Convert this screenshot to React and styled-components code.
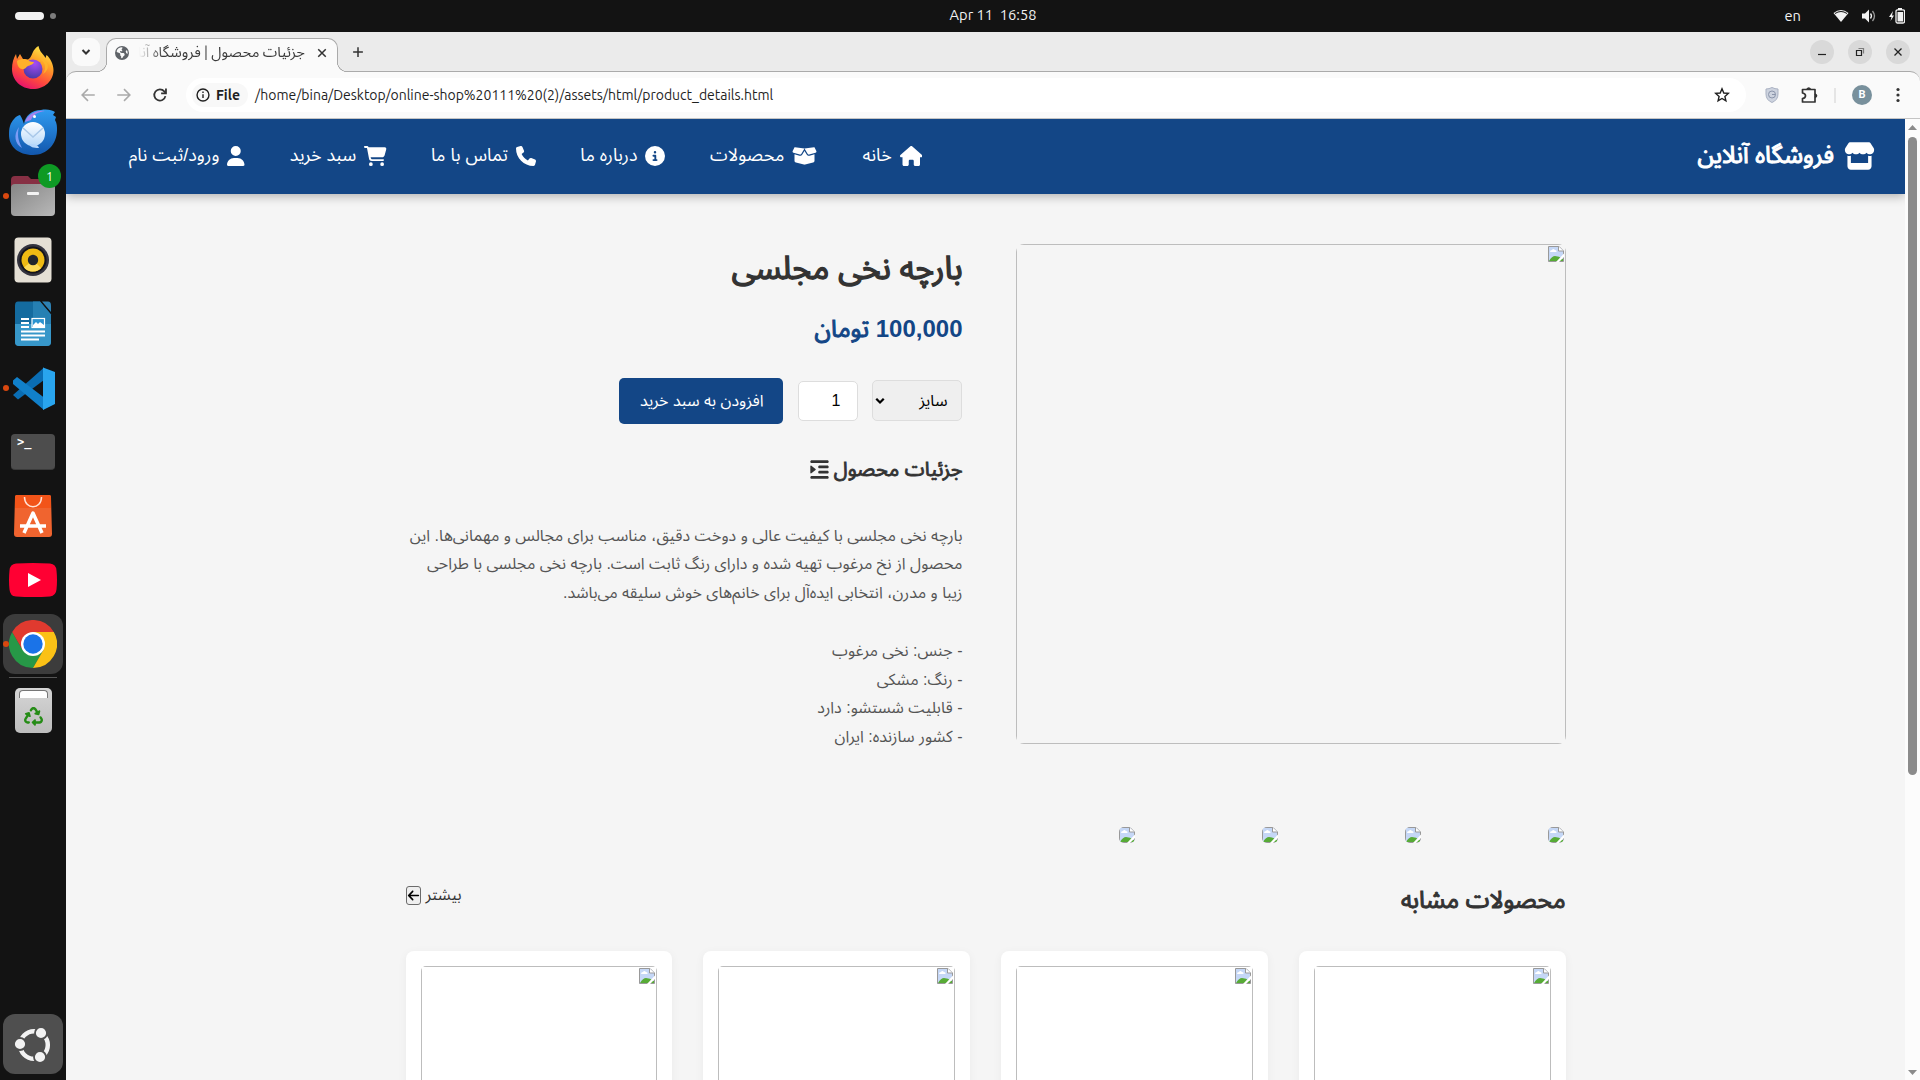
import React from 'react';
import styled, { createGlobalStyle, css } from 'styled-components';
import {
  FaStore, FaHouse, FaBoxOpen, FaCircleInfo, FaPhone, FaCartShopping, FaUser, FaIndent, FaArrowLeft,
  FaEarthAmericas, FaRecycle,
} from 'react-icons/fa6';

const PERSIAN = "'Liberation Sans', 'Noto Sans Arabic', 'Noto Sans', 'DejaVu Sans', sans-serif";
const SYSTEM = "'Ubuntu', 'Noto Sans', 'Noto Sans Arabic', 'DejaVu Sans', sans-serif";
const BLUE = '#134686';

const Global = createGlobalStyle`
  * { box-sizing: border-box; }
  body { margin: 0; overflow: hidden; background: #131313; }
  svg { display: block; flex: none; }
`;

/* Heavier strokes that keep the advance widths of the regular face. */
const heavy = css`font-weight: 400; -webkit-text-stroke: 0.043em currentColor;`;

/* ---------- desktop ---------- */
const Desktop = styled.div`
  width: 1920px; height: 1080px; display: flex; flex-direction: column;
  background: #131313; font-family: ${SYSTEM}; overflow: hidden;
`;
const TopBar = styled.header`
  height: 32px; flex: none; display: grid; grid-template-columns: 1fr auto 1fr; align-items: center;
  color: #f2f2f2; font-size: 14.667px;
`;
const Workspaces = styled.div`display: flex; align-items: center; gap: 6px; padding-left: 15px;`;
const Pill = styled.i`width: 29px; height: 8px; border-radius: 4px; background: #f2f2f2;`;
const Dot = styled.i`width: 6px; height: 6px; border-radius: 50%; background: #7d7d7d;`;
const Clock = styled.div`white-space: pre; padding-left: 66px; line-height: 30px; height: 32px;`;
const Tray = styled.div`display: flex; align-items: center; justify-content: flex-end; padding-right: 15px;`;
const Lang = styled.span`margin-right: 32px; line-height: 30px;`;
const TrayIcons = styled.div`display: flex; align-items: center; gap: 12px;`;
const Workarea = styled.div`flex: 1; min-height: 0; display: flex;`;

/* ---------- dock ---------- */
const Dock = styled.nav`width: 66px; flex: none; display: flex; flex-direction: column; padding: 4px 0 4px;`;
const DockItem = styled.div`
  height: 64px; width: 66px; position: relative; display: flex; align-items: center; justify-content: center; flex: none;
  ${p => p.$running && css`&::after { content: ''; position: absolute; left: 3px; top: 29px; width: 6px; height: 6px; border-radius: 50%; background: #d9480f; }`}
`;
const Plate = styled.div`
  width: 60px; height: 60px; border-radius: 12px; display: flex; align-items: center; justify-content: center;
  background: ${p => p.$bg};
`;
const Badge = styled.span`
  position: absolute; left: 38px; top: 0; width: 23px; height: 24px; border-radius: 50%; background: #0e9a24;
  color: #fff; font-size: 12.5px; line-height: 24px; text-align: center;
`;
const Divider = styled.div`width: 48px; height: 1px; margin: 1px 9px 0; background: #555; flex: none;`;
const Spacer = styled.div`flex: 1;`;
const TermBox = styled.div`
  width: 44px; height: 36px; border-radius: 4px; background: #4d4d4d; border-bottom: 1px solid #3b3b3b;
  color: #fff; font: bold 12px/14px 'DejaVu Sans Mono', 'Liberation Mono', monospace; padding: 1px 0 0 6px;
`;
const TrashBox = styled.div`
  width: 37px; height: 45px; border-radius: 5px; background: linear-gradient(#d5d5d5, #bdbdbd); color: #258c16;
  display: flex; flex-direction: column; align-items: center; gap: 9px; padding-top: 2px;
`;
const TrashSlot = styled.i`width: 29px; height: 8px; border-radius: 4px 4px 0 0; background: #fff; border: 1px solid #777; border-bottom: 0;`;

const Firefox = () => (
  <svg width="44" height="44" viewBox="0 0 44 44">
    <defs>
      <linearGradient id="ff" x1=".8" y1="0" x2=".3" y2="1"><stop offset="0" stopColor="#fff14f" /><stop offset=".35" stopColor="#ffa326" /><stop offset=".7" stopColor="#ff4a3d" /><stop offset="1" stopColor="#e5106f" /></linearGradient>
      <radialGradient id="fp" cx=".6" cy=".2" r=".8"><stop offset="0" stopColor="#a74cf5" /><stop offset="1" stopColor="#4b3aa8" /></radialGradient>
    </defs>
    <path fill="url(#ff)" d="M22 43C10 43 1 34 1 23c0-6 1.500-11 4-15l1 5 3-5 3 5 5 .5C20 12 21 8 21.500 7c1-3 4-6 6-7 1 6 5 8 7 12l1-3c4 3 7 10 7 15 0 11-9 19-20.500 19z" />
    <circle cx="22" cy="23" r="9.500" fill="url(#fp)" />
    <path fill="#ffb02b" d="M6 15c4-3 8-2 11-1 2 2 5 2 6 2-1 3-4 3-6 4-2 1-3 4-6 3-3 0-5-4-5-8z" />
    <path fill="#ffb62c" opacity=".8" d="M28 13c6 2 8 8 4 15 8-5 6-14-4-15z" />
  </svg>
);
const Thunderbird = () => (
  <svg width="48" height="48" viewBox="0 0 48 48">
    <defs>
      <linearGradient id="tb" x1="0" y1="0" x2="0" y2="1"><stop offset="0" stopColor="#2f9bf0" /><stop offset="1" stopColor="#1257ad" /></linearGradient>
      <linearGradient id="te" x1="0" y1="0" x2="0" y2="1"><stop offset="0" stopColor="#fff" /><stop offset="1" stopColor="#b7d9fa" /></linearGradient>
    </defs>
    <path fill="url(#tb)" d="M1 18C3 12 7 8 11 7c2 3 3 6 4 9 1-8 8-14 17-14 6-1 11 0 14 2l-2 3 3 2-1 3c2 3 2 7 2 10 0 14-10 25-24 25C9 47 0 38 0 27c0-3 0-6 1-9z" />
    <path d="M16 14c3-8 11-12 20-11-8 1-12 4-14 9z" fill="#a583ef" />
    <path d="M10 19c-6 8-4 17 3 21-4-8-5-13-3-21z" fill="#7c9cf5" />
    <circle cx="24" cy="26" r="12" fill="url(#te)" />
    <path d="m14 20 10 9 10-9" fill="none" stroke="#a9c8e9" strokeWidth="1.500" />
    <circle cx="25.500" cy="8.500" r="1.500" fill="#fff" />
    <path d="M20 36c4 0 9 0 10 4-6 0-9-1-10-4z" fill="#b5d6fb" />
  </svg>
);
const Files = () => (
  <svg width="44" height="40" viewBox="0 0 44 40">
    <defs><linearGradient id="fi" x1="0" y1="0" x2="1" y2="1"><stop offset="0" stopColor="#868686" /><stop offset="1" stopColor="#b8b8b8" /></linearGradient></defs>
    <path d="M0 14V4q0-4 4-4h13l3 3h20q4 0 4 4v9H0z" fill="#873044" />
    <path d="M0 12q0-4 4-4h36q4 0 4 4v24q0 4-4 4H4q-4 0-4-4z" fill="url(#fi)" />
    <rect x="16" y="16" width="12" height="3" rx="1" fill="#f3f3f3" />
  </svg>
);
const Rhythmbox = () => (
  <svg width="38" height="46" viewBox="0 0 38 46">
    <rect x=".5" y=".5" width="37" height="45" rx="4" fill="#e5e0d5" />
    <circle cx="19" cy="23" r="16" fill="#34343f" />
    <circle cx="19" cy="23" r="13.500" fill="#15151b" />
    <circle cx="19" cy="23" r="11.500" fill="#efbb13" />
    <path d="M19 23 10 30.500A11.500 11.500 0 0 0 27 31z" fill="#ffdc57" />
    <circle cx="19" cy="23" r="5.200" fill="#23272c" />
  </svg>
);
const Writer = () => (
  <svg width="38" height="46" viewBox="0 0 38 46">
    <path d="M4 .500h22l11 13V41q0 4-4 4H5q-4 0-4-4V4.500q0-4 3-4z" fill="#146b9f" />
    <path d="M19 .500h7l11 13v9.500H19z" fill="#2680b3" />
    <path d="M1 23h36v18q0 4-4 4H5q-4 0-4-4z" fill="#3797c9" />
    <path d="M28 .500h6q3 0 3 4V11z" fill="#2e82b4" />
    <path stroke="#fff" strokeWidth="2" d="M7 18h8M7 22h8M7 26h8M7 30.500h24M7 34.500h24M7 38.500h18" />
    <rect x="18" y="17.500" width="12.500" height="9" fill="#2c93cf" stroke="#fff" strokeWidth="1.200" />
    <path d="M19 26v-2l3-3 2 2 2-2 4 3v2z" fill="#fff" />
  </svg>
);
const VsCode = () => (
  <svg width="43" height="43" viewBox="0 0 43 43">
    <path d="M1 28 32 .500v12.500L6 32.500z" fill="#0a6db3" />
    <path d="M1 13.500 5 10l27 20.500V43L1 17z" fill="#1180ca" />
    <path d="M31 .500 43 5v32L31 43z" fill="#29a5ee" />
  </svg>
);
const AppCenter = () => (
  <svg width="38" height="44" viewBox="0 0 38 44">
    <path d="M3 1h32q2 0 2 2l1 37q0 3-3 3H3q-3 0-3-3L1 3q0-2 2-2z" fill="#f0642f" />
    <path d="M3 1h32q2 0 2 2v11H1V3q0-2 2-2z" fill="#f25419" />
    <path d="M10.500 3c0 13 17 13 17 0" fill="none" stroke="#ffe3d6" strokeWidth="1.500" />
    <path d="M10 39 19 19l9 20M6 32h26" fill="none" stroke="#fff" strokeWidth="3.500" strokeLinejoin="round" />
  </svg>
);
const YouTube = () => (
  <svg width="48" height="34" viewBox="0 0 48 34"><path d="M7 .500q17-1 34 0 6 .500 6.500 7 1 9.500 0 19-.500 6-6.500 7-17 1-34 0-6-.500-6.500-7-1-9.500 0-19Q1 1 7 .500z" fill="#ff0033" /><path d="m19 10 13 7-13 7z" fill="#fff" /></svg>
);
const ChromeLogo = () => (
  <svg width="48" height="48" viewBox="0 0 48 48">
    <path d="M3.200 12 13.600 30 24 24l10.400 6L24 48A24 24 0 0 1 3.200 12z" fill="#279847" />
    <path d="M24 12h20.800A24 24 0 0 1 24 48l10.400-18z" fill="#fbc116" />
    <path d="M24 12h20.800A24 24 0 0 0 3.200 12l10.400 18z" fill="#e03a2f" />
    <circle cx="24" cy="24" r="12" fill="#fff" /><circle cx="24" cy="24" r="9.700" fill="#1a73e8" />
  </svg>
);
const UbuntuLogo = () => (
  <svg width="38" height="38" viewBox="0 0 38 38">
    <circle cx="20" cy="20" r="13.800" fill="none" stroke="#f2f2f2" strokeWidth="4.500" />
    <g fill="#f2f2f2" stroke="#4f4f4f" strokeWidth="1.800"><circle cx="6" cy="19" r="6" /><circle cx="27" cy="8" r="6" /><circle cx="26" cy="32" r="6" /></g>
  </svg>
);

/* ---------- browser chrome ---------- */
const Browser = styled.section`flex: 1; min-width: 0; display: flex; flex-direction: column; background: #ebebeb;`;
const TabStrip = styled.div`height: 39px; flex: none; display: flex; padding: 6px 10px 0 6px;`;
const TabSearch = styled.div`
  width: 28px; height: 28px; border-radius: 9px; background: #fafafa; display: flex; align-items: center; justify-content: center;
`;
const Tab = styled.div`
  width: 232px; height: 34px; margin: 0 0 0 6px; position: relative; z-index: 1; background: #fafafa;
  border: 1px solid #aaa; border-bottom: 0; border-radius: 10px 10px 0 0; display: flex; align-items: center;
  padding: 0 9px 6px 8px; color: #3c3c3c;
  &::before, &::after { content: ''; position: absolute; bottom: 0; width: 10px; height: 10px; }
  &::before { left: -10px; background: radial-gradient(circle at 0 0, transparent 9px, #aaa 9.300px 9.800px, #fafafa 10.200px); }
  &::after { right: -10px; background: radial-gradient(circle at 100% 0, transparent 9px, #aaa 9.300px 9.800px, #fafafa 10.200px); }
`;
const TabTitle = styled.div`
  direction: rtl; width: 167px; margin: 0 11px 2px 10px; overflow: hidden; white-space: nowrap; font-size: 14.667px; line-height: 26px;
  mask-image: linear-gradient(to right, transparent, #000 24px);
`;
const NewTab = styled.div`padding: 8px 0 0 14px;`;
const WindowButtons = styled.div`margin-left: auto; display: flex; gap: 14px; padding-top: 2px;`;
const WinButton = styled.div`width: 24px; height: 24px; border-radius: 50%; background: #d9d9d9; display: flex; align-items: center; justify-content: center;`;
const Toolbar = styled.div`
  height: 48px; flex: none; background: #fafafa; border: 1px solid #aaa; border-bottom-color: #c4c4c4; border-width: 1px 0;
  border-radius: 10px 10px 0 0; display: flex; align-items: center; padding: 0 20px 0 13px; color: #3a3a3a;
`;
const NavButtons = styled.div`display: flex; gap: 18px; width: 107px;`;
const AddressBar = styled.div`
  flex: 1; height: 34px; border-radius: 17px; background: #fff; display: flex; align-items: center; padding: 0 16px 0 6px;
  color: #1f1f1f; font-size: 14px;
`;
const FileChip = styled.div`
  height: 24px; border-radius: 12px; background: #f8f8f8; display: flex; align-items: center; gap: 6px; padding: 0 8px 0 4px;
  font-weight: 600;
`;
const Url = styled.div`flex: 1; padding-left: 7px; white-space: nowrap; letter-spacing: -0.015px;`;
const Extensions = styled.div`display: flex; align-items: center; padding-left: 19px;`;
const ShieldSlot = styled.div`margin-right: 22px;`;
const Avatar = styled.div`
  width: 20px; height: 20px; border-radius: 50%; background: #78909c; color: #fff; font: bold 11px/20px Roboto, sans-serif;
  text-align: center; margin: 0 24px 0 16px;
`;
const Separator = styled.i`width: 2px; height: 15px; background: #e5e5e5; margin-left: 16px;`;

/* ---------- page ---------- */
const Viewport = styled.div`flex: 1; min-height: 0; display: flex;`;
const Page = styled.div`
  flex: 1; min-width: 0; direction: rtl; background: #f5f5f5; font-family: ${PERSIAN}; color: #333; overflow: hidden;
  display: flex; flex-direction: column; align-items: center;
`;
const Scrollbar = styled.div`
  width: 15px; flex: none; background: #fcfcfc; display: flex; flex-direction: column; align-items: center; padding: 6px 0 5px;
`;
const Thumb = styled.i`width: 9px; height: 638px; margin: 7px 0 auto; border-radius: 5px; background: #8b8b8b;`;
const SiteHeader = styled.header`
  align-self: stretch; height: 75px; flex: none; background: ${BLUE}; color: #fff; box-shadow: 0 2px 10px rgba(0, 0, 0, .3);
  display: flex; align-items: center; justify-content: space-between; padding: 0 30px 2px 61px;
`;
const Brand = styled.div`
  display: flex; align-items: center; gap: 10px; font-size: 24px; ${heavy} svg { width: 31px; height: 28px; -webkit-text-stroke: 0; }
`;
const SiteNav = styled.nav`display: flex; gap: 43px;`;
const NavLink = styled.a`
  display: flex; align-items: center; gap: 8px; font-size: 17.900px; line-height: 30px; white-space: nowrap;
  svg { height: 20px; width: ${p => p.$icon}px; }
`;
const NavText = styled.span`width: ${p => p.$w}px; padding-bottom: 1px;`;
const Container = styled.main`width: 1160px; flex: none; padding-top: 50px;`;
const Product = styled.section`display: flex; gap: 53px; height: 500px;`;
const FrameClip = styled.div`width: ${p => p.$w}; height: ${p => p.$h}px; flex: none; border-radius: ${p => p.$r}px; overflow: hidden;`;
const FrameLine = styled.div`height: 100%; border: 1px solid #bdbdbd; padding: 1px;`;
const Info = styled.div`width: 557px;`;
const Title = styled.h1`margin: 0; font-size: 32px; line-height: 48px; height: 65px; white-space: nowrap; ${heavy}`;
const Price = styled.div`font-size: 24px; color: ${BLUE}; line-height: 40px; height: 69px; white-space: nowrap; ${heavy}`;
const Digits = styled.b`-webkit-text-stroke: 0; font-weight: bold;`;
const BuyRow = styled.div`display: flex; align-items: center; gap: 14px; height: 46px; padding-right: 1px;`;
const SizeSelect = styled.div`
  width: 90px; height: 41px; border: 1px solid #ddd; border-radius: 5px; background: #efefef; color: #000; margin-bottom: 1px;
  display: flex; align-items: center; justify-content: space-between; padding: 0 13px 0 1px; font-size: 16px;
`;
const Quantity = styled.div`
  width: 60px; height: 40px; border: 1px solid #ddd; border-radius: 5px; background: #fff; color: #000; font-size: 16px;
  line-height: 37px; padding-right: 16px;
`;
const AddButton = styled.div`
  width: 164px; height: 46px; border-radius: 5px; background: ${BLUE}; color: #fff; font-size: 16px; line-height: 46px;
  padding-right: 19px; margin-right: 1px; white-space: nowrap;
`;
const Subtitle = styled.h3`
  margin: 30px 0 37.600px; font-size: 20px; line-height: 30px; display: flex; align-items: center; gap: 5px; white-space: nowrap;
  ${heavy}
  svg { width: 19px; height: 21px; -webkit-text-stroke: 0; }
`;
const Line = styled.div`font-size: 16px; line-height: 28.800px; height: 28.800px; color: #555; white-space: nowrap;`;
const Thumbs = styled.div`display: flex; gap: 127px; padding: 83px 2px 0 0; height: 141px;`;
const ThumbClip = styled.div`width: 16px; height: 16px; border-radius: 5px; overflow: hidden;`;
const SectionHead = styled.div`display: flex; justify-content: space-between; height: 66px;`;
const SectionTitle = styled.h2`margin: 0; font-size: 24px; line-height: 30px; ${heavy}`;
const More = styled.div`display: flex; height: 19px; align-items: center; gap: 5px; font-size: 16px; line-height: 19px; margin-top: 1px;`;
const MoreText = styled.span`padding-bottom: 2px;`;
const MoreButton = styled.div`
  width: 15px; height: 19px; border: 1px solid #6b6b6b; border-radius: 3px; background: #efefef; color: #000; display: flex;
  align-items: center; justify-content: center;
`;
const Cards = styled.div`display: grid; grid-template-columns: repeat(4, 1fr); gap: 31px;`;
const Card = styled.div`height: 330px; background: #fff; border-radius: 8px; padding: 15px; box-shadow: 0 2px 10px rgba(0, 0, 0, .05);`;

const BrokenImage = () => (
  <svg width="16" height="16" viewBox="0 0 16 16">
    <path d="M.500.500h10.500l4.500 4.500v10.500H.500z" fill="#c8d9f8" stroke="#999" />
    <path d="M1 1h9v5h5v4H1z" fill="#c5d7f6" />
    <path d="M2 6q0-2 2-2 1-2 3 0 2 0 1.500 2z" fill="#fff" />
    <path d="M1 15q3-5 6-5 4 0 8 3v2z" fill="#57ab36" />
    <path d="M10.500.500v4.500h5" fill="#fff" stroke="#999" />
    <path d="M16 7.500 8 16h3l5-5z" fill="#fff" />
  </svg>
);
const BrokenFrame = ({ w, h, r }) => (
  <FrameClip $w={w} $h={h} $r={r}><FrameLine><BrokenImage /></FrameLine></FrameClip>
);

const NAV = [
  ['خانه', FaHouse, 31.3, 22.5], ['محصولات', FaBoxOpen, 76, 25], ['درباره ما', FaCircleInfo, 58.5, 20],
  ['تماس با ما', FaPhone, 78.2, 20], ['سبد خرید', FaCartShopping, 68.4, 22.5], ['ورود/ثبت نام', FaUser, 92.4, 17.5],
];
const LINES = [
  'بارچه نخی مجلسی با کیفیت عالی و دوخت دقیق، مناسب برای مجالس و مهمانی‌ها. این',
  'محصول از نخ مرغوب تهیه شده و دارای رنگ ثابت است. بارچه نخی مجلسی با طراحی',
  'زیبا و مدرن، انتخابی ایده‌آل برای خانم‌های خوش سلیقه می‌باشد.',
  '', '- جنس: نخی مرغوب', '- رنگ: مشکی', '- قابلیت شستشو: دارد', '- کشور سازنده: ایران',
];

const Stroke = ({ d, size = 16, w = 1.8, color = 'currentColor', children }) => (
  <svg width={size} height={size} viewBox="0 0 16 16" fill="none" stroke={color} strokeWidth={w}>{d && <path d={d} />}{children}</svg>
);

export default function App() {
  return (
    <Desktop>
      <Global />
      <TopBar>
        <Workspaces><Pill /><Dot /></Workspaces>
        <Clock>Apr 11  16:58</Clock>
        <Tray>
          <Lang>en</Lang>
          <TrayIcons>
            <svg width="16" height="14" viewBox="0 0 16 14"><path d="M.500 4Q8-2 15.500 4L8 13z" fill="#f2f2f2" /><path d="M2 4.500q6-4 12 0" fill="none" stroke="#131313" strokeWidth="1" /></svg>
            <svg width="16" height="14" viewBox="0 0 16 14" fill="none" stroke="#f2f2f2" strokeWidth="1.300"><path d="M1 4.500h3l4-4v13l-4-4H1z" fill="#f2f2f2" stroke="none" /><path d="M9.500 4.500q2 2.500 0 5" /><path d="M11.500 2q4 5 0 10" opacity=".6" /></svg>
            <svg width="16" height="16" viewBox="0 0 16 16"><path d="M4 3 0 9h2.500L1.500 13 5 7.500H3z" fill="#f2f2f2" /><path d="M9 0h4v2H9z" fill="#f2f2f2" /><rect x="7" y="1.800" width="8.500" height="13.200" rx="1.500" fill="none" stroke="#f2f2f2" strokeWidth="1.300" /><path d="M8.500 4h5.500v9.500H8.500z" fill="#f2f2f2" /></svg>
          </TrayIcons>
        </Tray>
      </TopBar>
      <Workarea>
        <Dock>
          <DockItem><Firefox /></DockItem>
          <DockItem><Thunderbird /></DockItem>
          <DockItem $running><Files /><Badge>1</Badge></DockItem>
          <DockItem><Rhythmbox /></DockItem>
          <DockItem><Writer /></DockItem>
          <DockItem $running><VsCode /></DockItem>
          <DockItem><TermBox>&gt;_</TermBox></DockItem>
          <DockItem><AppCenter /></DockItem>
          <DockItem><YouTube /></DockItem>
          <DockItem $running><Plate $bg="#3c3c3c"><ChromeLogo /></Plate></DockItem>
          <Divider />
          <DockItem><TrashBox><TrashSlot /><FaRecycle size={19} /></TrashBox></DockItem>
          <Spacer />
          <DockItem><Plate $bg="#4f4f4f"><UbuntuLogo /></Plate></DockItem>
        </Dock>
        <Browser>
          <TabStrip>
            <TabSearch><Stroke d="m4.500 6 3.500 3.500L11.500 6" w={2} color="#333" /></TabSearch>
            <Tab>
              <FaEarthAmericas size={14} color="#5f6368" />
              <TabTitle>جزئیات محصول | فروشگاه آنلاین</TabTitle>
              <Stroke size={12} d="m3 3 10 10M13 3 3 13" w={2} color="#333" />
            </Tab>
            <NewTab><Stroke size={12} d="M8 1.500v13M1.500 8h13" w={2} color="#333" /></NewTab>
            <WindowButtons>
              <WinButton><Stroke d="M4 10.500h8" w={1.2} color="#222" /></WinButton>
              <WinButton><Stroke w={1.2} color="#222"><path d="M4.500 6.500h5v5h-5z" /><path d="M6.500 4.500h5v5" opacity=".5" /></Stroke></WinButton>
              <WinButton><Stroke d="m4.500 4.500 7 7M11.500 4.500l-7 7" w={1.3} color="#222" /></WinButton>
            </WindowButtons>
          </TabStrip>
          <Toolbar>
            <NavButtons>
              <Stroke size={18} d="M14 8H3M8 2.800 2.800 8 8 13.200" w={1.4} color="#aaa" />
              <Stroke size={18} d="M2 8h11M8 2.800 13.200 8 8 13.200" w={1.4} color="#aaa" />
              <Stroke size={18} w={1.6} color="#333"><path d="M12.800 9A5 5 0 1 1 11.800 4.800l1.200 1.400" /><path d="M13.300 2.200v4.300H9" /></Stroke>
            </NavButtons>
            <AddressBar>
              <FileChip><Stroke size={14} w={1.6}><circle cx="8" cy="8" r="6.800" /><path d="M8 7v4.500M8 4v1.700" /></Stroke>File</FileChip>
              <Url>/home/bina/Desktop/online-shop%20111%20(2)/assets/html/product_details.html</Url>
              <Stroke d="m8 1.800 1.800 4.200 4.500.4-3.400 3 1 4.500L8 11.500l-3.900 2.400 1-4.500-3.400-3 4.500-.4z" w={1.4} />
            </AddressBar>
            <Extensions>
              <ShieldSlot><svg width="14" height="16" viewBox="0 0 14 16"><path d="M7 .500q3 1.500 6 1.500v5q0 6-6 8.500Q1 13 1 7V2q3 0 6-1.500z" fill="#cdd3df" stroke="#a9b1c2" /><circle cx="7" cy="7.500" r="3.500" fill="none" stroke="#8b95ab" /><path d="M7 7.500h3.500" stroke="#8b95ab" /></svg></ShieldSlot>
              <svg width="17" height="17" viewBox="0 0 17 17" fill="none" stroke="#333" strokeWidth="1.700"><path d="M1.500 2.500h12.500v12.500H1.500v-3.500q3-.5 3-2.750t-3-2.750z" strokeLinejoin="round" /><path d="M6 2.500q1.700-3 3.500 0M14 7q3 1.700 0 3.500" fill="#333" /></svg>
              <Separator />
              <Avatar>B</Avatar>
              <svg width="4" height="16" viewBox="0 0 4 16" fill="#333"><circle cx="2" cy="2.500" r="1.600" /><circle cx="2" cy="8" r="1.600" /><circle cx="2" cy="13.500" r="1.600" /></svg>
            </Extensions>
          </Toolbar>
          <Viewport>
            <Page>
              <SiteHeader>
                <Brand><FaStore />فروشگاه آنلاین</Brand>
                <SiteNav>
                  {NAV.map(([t, Icon, w, iw]) => <NavLink key={t} $icon={iw}><Icon /><NavText $w={w}>{t}</NavText></NavLink>)}
                </SiteNav>
              </SiteHeader>
              <Container>
                <Product>
                  <BrokenFrame w="550px" h={500} r={8} />
                  <Info>
                    <Title>بارچه نخی مجلسی</Title>
                    <Price><Digits>100,000</Digits> تومان</Price>
                    <BuyRow>
                      <SizeSelect>سایز<Stroke size={12} d="m3 5 5 5 5-5" w={3} /></SizeSelect>
                      <Quantity>1</Quantity>
                      <AddButton>افزودن به سبد خرید</AddButton>
                    </BuyRow>
                    <Subtitle>جزئیات محصول<FaIndent /></Subtitle>
                    {LINES.map((l, i) => <Line key={i}>{l}</Line>)}
                  </Info>
                </Product>
                <Thumbs>{[0, 1, 2, 3].map(i => <ThumbClip key={i}><BrokenImage /></ThumbClip>)}</Thumbs>
                <SectionHead>
                  <SectionTitle>محصولات مشابه</SectionTitle>
                  <More><MoreText>بیشتر</MoreText><MoreButton><FaArrowLeft size={13} /></MoreButton></More>
                </SectionHead>
                <Cards>
                  {[0, 1, 2, 3].map(i => <Card key={i}><BrokenFrame w="100%" h={300} r={5} /></Card>)}
                </Cards>
              </Container>
            </Page>
            <Scrollbar>
              <svg width="9" height="5" viewBox="0 0 9 5"><path d="m0 5 4.500-5L9 5z" fill="#8b8b8b" /></svg>
              <Thumb />
              <svg width="9" height="5" viewBox="0 0 9 5"><path d="m0 0 4.500 5L9 0z" fill="#8b8b8b" /></svg>
            </Scrollbar>
          </Viewport>
        </Browser>
      </Workarea>
    </Desktop>
  );
}
